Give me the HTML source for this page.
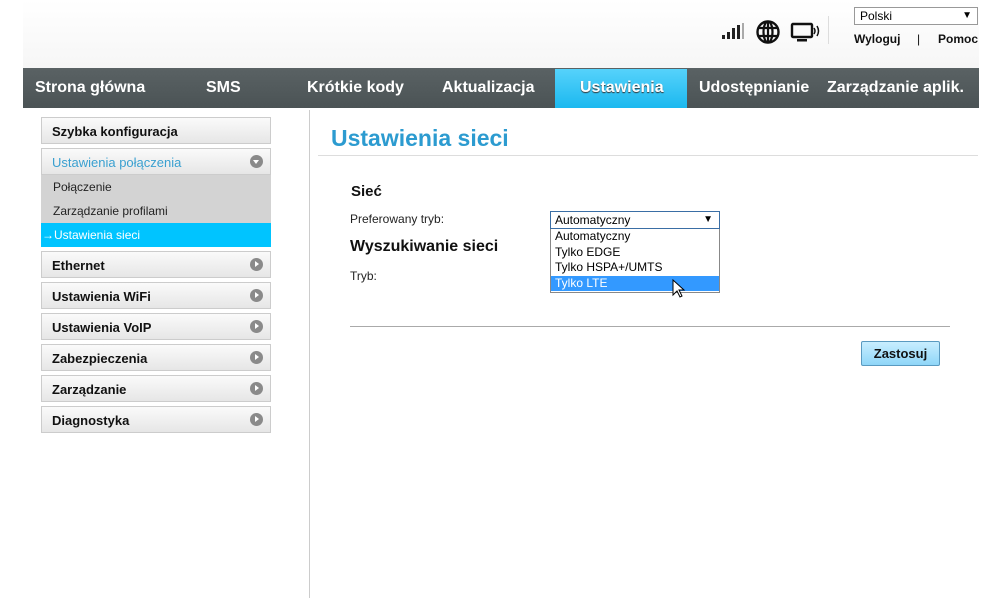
<!DOCTYPE html>
<html><head><meta charset="utf-8"><style>
*{box-sizing:border-box;margin:0;padding:0}
body{width:984px;height:598px;overflow:hidden;background:#fff;font-family:"Liberation Sans",Arial,sans-serif;position:relative}
.abs{position:absolute}
.hdr{left:23px;top:0;width:956px;height:68px;background:linear-gradient(#fff,#f6f6f6)}
.nav{left:23px;top:68px;width:956px;height:40px;background:linear-gradient(#5a6264,#4b5355);}
.navt span{position:absolute;top:11px;color:#fff;font-weight:bold;font-size:16px;white-space:nowrap}
.act{left:555px;top:69px;width:132px;height:39px;background:linear-gradient(#56d2fb,#1bb8ef)}
.item{position:absolute;left:41px;width:230px;height:27px;border:1px solid #ccc;background:linear-gradient(#fafafa,#e6e6e6);font-size:13px;font-weight:bold;color:#111;padding:6px 0 0 10px}
.item i{position:absolute;right:7px;top:6px;width:13px;height:13px;border-radius:50%;background:#8a8a8a}
.item i:after{content:"";position:absolute;left:5px;top:3px;border-left:4px solid #fff;border-top:3.5px solid transparent;border-bottom:3.5px solid transparent}
.item i.d:after{left:3px;top:5px;border-top:4px solid #fff;border-left:3.5px solid transparent;border-right:3.5px solid transparent;border-bottom:0}
.sub{position:absolute;left:41px;width:230px;height:24px;font-size:12px;color:#222;padding:5px 0 0 12px;background:#d3d3d3}
.t{position:absolute;font-size:12px;color:#222;white-space:nowrap}
</style></head><body>
<div class="abs hdr"></div>
<svg class="abs" style="left:720px;top:20px" width="100" height="26">
<rect x="2" y="15" width="3" height="4" fill="#222"/><rect x="7" y="12" width="3" height="7" fill="#222"/><rect x="12" y="8" width="3" height="11" fill="#222"/><rect x="17" y="5" width="3" height="14" fill="#222"/><rect x="22" y="3" width="2" height="16" fill="#aaa"/>
<circle cx="48" cy="12" r="10.5" fill="none" stroke="#111" stroke-width="2.4"/><ellipse cx="48" cy="12" rx="4.5" ry="10.5" fill="none" stroke="#111" stroke-width="2.2"/><line x1="38" y1="8" x2="58" y2="8" stroke="#111" stroke-width="2.2"/><line x1="38" y1="16" x2="58" y2="16" stroke="#111" stroke-width="2.2"/><line x1="48" y1="1" x2="48" y2="23" stroke="#111" stroke-width="2.2"/>
<rect x="72" y="4" width="20" height="13" rx="1" fill="none" stroke="#111" stroke-width="2.4"/><rect x="77" y="19" width="10" height="2.5" fill="#111"/><path d="M94 8q2 3 0 6M97 6q3 5 0 10" fill="none" stroke="#111" stroke-width="1.5"/>
</svg>
<div class="abs" style="left:828px;top:16px;width:1px;height:28px;background:#ddd"></div>
<div class="abs" style="left:854px;top:7px;width:124px;height:18px;border:1px solid #999;background:#fff;font-size:12px;padding:1px 0 0 5px">Polski<span style="position:absolute;right:5px;top:2px;font-size:10px">▼</span></div>
<div class="abs" style="left:854px;top:32px;font-size:12px;font-weight:bold;color:#111">Wyloguj</div>
<div class="abs" style="left:917px;top:32px;font-size:12px;color:#111">|</div>
<div class="abs" style="left:938px;top:32px;font-size:12px;font-weight:bold;color:#111">Pomoc</div>
<div class="abs nav"></div>
<div class="abs act"></div>
<div class="abs navt" style="left:23px;top:68px;width:956px;height:40px">
<span style="left:12px">Strona główna</span><span style="left:183px">SMS</span><span style="left:284px">Krótkie kody</span><span style="left:419px">Aktualizacja</span><span style="left:557px;text-shadow:0 1px 1px #333">Ustawienia</span><span style="left:676px">Udostępnianie</span><span style="left:804px">Zarządzanie aplik.</span>
</div>
<div class="abs" style="left:309px;top:110px;width:1px;height:488px;background:#ccc"></div>
<div class="item" style="top:117px">Szybka konfiguracja</div>
<div class="item" style="top:148px;color:#3aa0d0;font-weight:normal">Ustawienia połączenia<i class="d"></i></div>
<div class="sub" style="top:175px">Połączenie</div>
<div class="sub" style="top:199px">Zarządzanie profilami</div>
<div class="sub" style="top:223px;background:#00c4ff;color:#fff;padding-left:1px">→Ustawienia sieci</div>
<div class="item" style="top:251px">Ethernet<i></i></div>
<div class="item" style="top:282px">Ustawienia WiFi<i></i></div>
<div class="item" style="top:313px">Ustawienia VoIP<i></i></div>
<div class="item" style="top:344px">Zabezpieczenia<i></i></div>
<div class="item" style="top:375px">Zarządzanie<i></i></div>
<div class="item" style="top:406px">Diagnostyka<i></i></div>
<div class="abs" style="left:331px;top:125px;font-size:23px;font-weight:bold;color:#2c9bd0">Ustawienia sieci</div>
<div class="abs" style="left:318px;top:155px;width:660px;height:1px;background:#ddd"></div>
<div class="abs" style="left:351px;top:183px;font-size:15px;font-weight:bold;color:#111">Sieć</div>
<div class="t" style="left:350px;top:212px">Preferowany tryb:</div>
<div class="abs" style="left:350px;top:238px;font-size:16px;font-weight:bold;color:#111">Wyszukiwanie sieci</div>
<div class="t" style="left:350px;top:269px">Tryb:</div>
<div class="abs" style="left:550px;top:211px;width:170px;height:18px;border:1px solid #3a6ea5;background:#fff;font-size:12px;padding:1px 0 0 4px">Automatyczny<span style="position:absolute;right:6px;top:2px;font-size:10px">▼</span></div>
<div class="abs" style="left:550px;top:229px;width:170px;height:64px;border:1px solid #888;border-top:0;background:#fff;font-size:12px;line-height:15.5px">
<div style="padding-left:4px">Automatyczny</div><div style="padding-left:4px">Tylko EDGE</div><div style="padding-left:4px">Tylko HSPA+/UMTS</div><div style="padding-left:4px;background:#3399ff;color:#fff">Tylko LTE</div></div>
<svg class="abs" style="left:672px;top:279px" width="14" height="20"><path d="M1 1v15l4-4 3 6 2-1-3-6h5z" fill="#fff" stroke="#000" stroke-width="1"/></svg>
<div class="abs" style="left:350px;top:326px;width:600px;height:1px;background:#aaa"></div>
<div class="abs" style="left:861px;top:341px;width:79px;height:25px;border:1px solid #5a9ac0;border-radius:2px;background:linear-gradient(#c8eeff,#8fd6f8);font-size:13px;font-weight:bold;color:#111;text-align:center;padding-top:4px">Zastosuj</div>
</body></html>
